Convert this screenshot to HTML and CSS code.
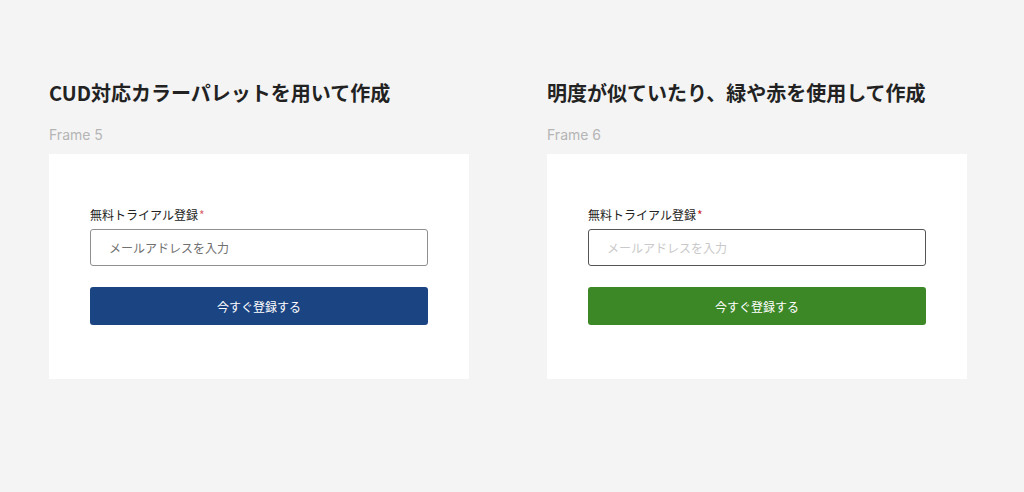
FILE: index.html
```html
<!DOCTYPE html>
<html lang="ja">
<head>
<meta charset="utf-8">
<link rel="stylesheet" href="styles.css">
</head>
<body>
<div class="board">
  <section class="col">
    <h2 class="title">CUD対応カラーパレットを用いて作成</h2>
    <div class="frame-name">Frame 5</div>
    <div class="card">
      <div class="label">無料トライアル登録<span class="req cud">*</span></div>
      <div class="input cud-input"><span class="ph cud-ph">メールアドレスを入力</span></div>
      <div class="btn cud-btn">今すぐ登録する</div>
    </div>
  </section>
  <section class="col">
    <h2 class="title">明度が似ていたり、緑や赤を使用して作成</h2>
    <div class="frame-name">Frame 6</div>
    <div class="card">
      <div class="label">無料トライアル登録<span class="req bad">*</span></div>
      <div class="input bad-input"><span class="ph bad-ph">メールアドレスを入力</span></div>
      <div class="btn bad-btn">今すぐ登録する</div>
    </div>
  </section>
</div>
</body>
</html>
```
FILE: styles.css
```css
html, body {
  margin: 0;
  padding: 0;
  background: #f4f4f4;
  font-family: "Noto Sans CJK JP", "Noto Sans", sans-serif;
}
.board {
  display: flex;
  gap: 78px;
  padding: 79px 0 0 49px;
}
.col {
  width: 420px;
  display: flex;
  flex-direction: column;
}
.title {
  margin: 0;
  font-size: 20px;
  line-height: 28px;
  font-weight: 700;
  color: #222;
}
.frame-name {
  margin-top: 18px;
  font-family: Inter, "Noto Sans", sans-serif;
  font-size: 14px;
  line-height: 20px;
  color: #b5b5b5;
  height: 20px;
}
.card {
  margin-top: 9px;
  background: #fff;
  height: 225px;
  box-sizing: border-box;
  padding: 52px 41px 0 41px;
  display: flex;
  flex-direction: column;
}
.label {
  font-size: 12px;
  line-height: 18px;
  color: #222;
  height: 18px;
}
.req { margin-left: 1px; }
.req.cud { color: #d9656a; }
.req.bad { color: #d11f1f; }
.input {
  margin-top: 5px;
  height: 37px;
  box-sizing: border-box;
  border-radius: 3px;
  background: #fff;
  display: flex;
  align-items: center;
  padding-left: 18px;
  font-size: 12px;
}
.cud-input { border: 1px solid #8f8f8f; }
.bad-input { border: 1px solid #555; }
.cud-ph { color: #707070; }
.bad-ph { color: #c9c9c9; }
.btn {
  margin-top: 21px;
  height: 38px;
  border-radius: 3px;
  display: flex;
  align-items: center;
  justify-content: center;
  font-size: 12px;
  color: #fff;
}
.cud-btn { background: #1b4483; }
.bad-btn { background: #3c8726; }
```
